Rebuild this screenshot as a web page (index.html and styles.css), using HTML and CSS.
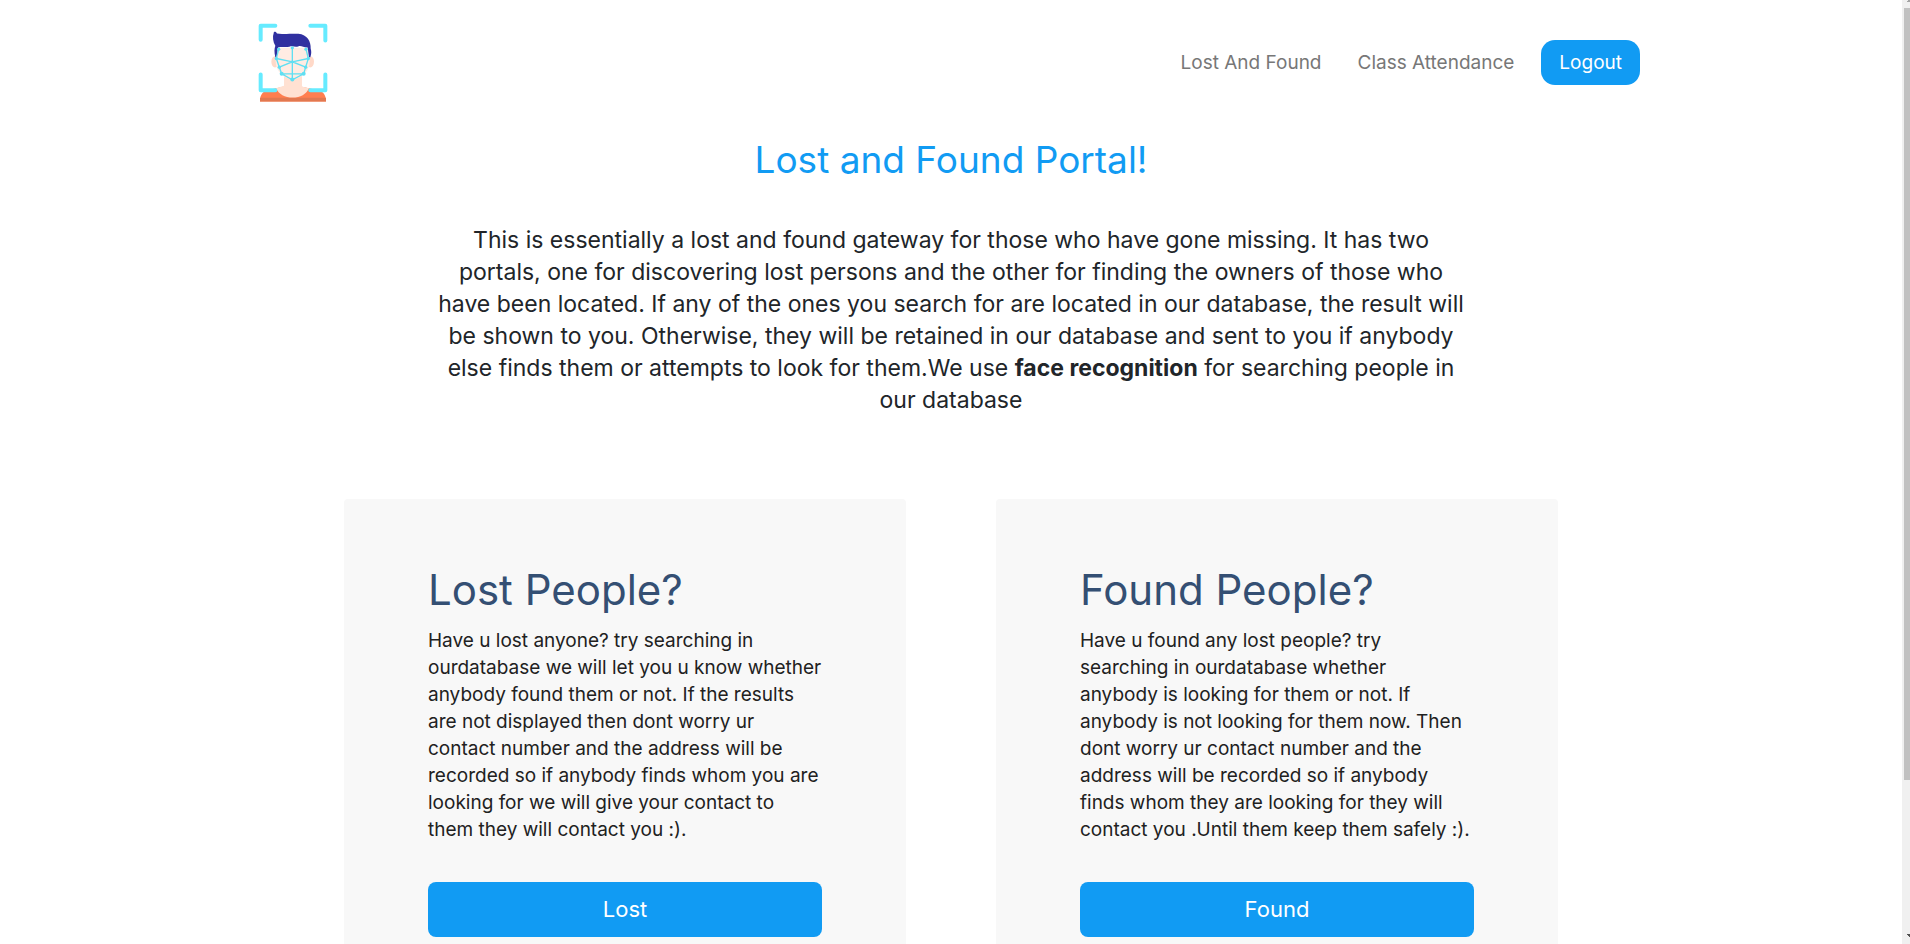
FILE: index.html
```html
<!DOCTYPE html>
<html lang="en">
<head>
<meta charset="utf-8">
<meta name="viewport" content="width=device-width, initial-scale=1">
<title>Lost and Found Portal</title>
<link rel="stylesheet" href="styles.css">
</head>
<body>
<div class="page">
  <header class="navbar">
    <a class="brand" href="#" aria-label="Home">
      <svg class="logo" viewBox="54 36 210 237" aria-hidden="true">
        <path d="M60 273c0-22 10-34 32-36l44-10h42l46 10c24 3 34 14 34 36z" fill="#ff7f50"/>
        <path d="M60 262h198v11H60z" fill="#e27850"/>
        <path d="M132 190h54v38l21 5c-8 18-26 28-49 28s-42-10-50-28l24-7z" fill="#ffe1d2"/>
        <ellipse cx="105" cy="154" rx="11" ry="17" fill="#ffd9c8"/>
        <ellipse cx="211" cy="154" rx="11" ry="17" fill="#ffd9c8"/>
        <path d="M107 112h102v42c0 30-28 53-51 53s-51-23-51-53z" fill="#ffece3"/>
        <path d="M106 140c-4-16-3-26 0-34-7-12-9-28-5-38 0-6 7-6 10 1 16 3 34-1 64 1 27 2 38 24 37 44 3 9 2 18-1 26h-4l-4-29c-14 0-18-6-27-4-11 4-18-2-28 2-14 2-22-1-34 2l-4 29z" fill="#3030a0"/>
        <g fill="none" stroke="#60dff2" stroke-width="4">
          <path d="M157 110v98M116 116l-7 28 9 26 7 20 32 18 34-18 6-20 8-26-7-28M109 144l48 10 48-10M118 170l39-16 40 16M125 190h66"/>
        </g>
        <g fill="#60dff2">
          <circle cx="116" cy="116" r="5"/><circle cx="157" cy="112" r="5"/><circle cx="198" cy="116" r="5"/>
          <circle cx="109" cy="144" r="5"/><circle cx="205" cy="144" r="5"/><circle cx="118" cy="170" r="5"/>
          <circle cx="197" cy="170" r="5"/><circle cx="125" cy="190" r="6"/><circle cx="191" cy="190" r="6"/>
          <circle cx="157" cy="207" r="6"/><circle cx="157" cy="154" r="4"/>
        </g>
        <path d="M62 88V46h44M211 46h45v44M62 192v47h44M211 239h45v-47" fill="none" stroke="#66ebff" stroke-width="12" stroke-linecap="round" stroke-linejoin="round"/>
      </svg>
    </a>
    <nav class="nav">
      <a class="nav-link" href="#">Lost And Found</a>
      <a class="nav-link" href="#">Class Attendance</a>
      <a class="logout" href="#">Logout</a>
    </nav>
  </header>
  <main>
    <section class="intro">
      <h1 class="title">Lost and Found Portal!</h1>
      <p class="lead">This is essentially a lost and found gateway for those who have gone missing. It has two<br>
        portals, one for discovering lost persons and the other for finding the owners of those who<br>
        have been located. If any of the ones you search for are located in our database, the result will<br>
        be shown to you. Otherwise, they will be retained in our database and sent to you if anybody<br>
        else finds them or attempts to look for them.We use <b>face recognition</b> for searching people in<br>
        our database</p>
    </section>
    <section class="cards">
      <article class="card">
        <h2 class="card-title">Lost People?</h2>
        <p class="card-text">Have u lost anyone? try searching in<br>
          ourdatabase we will let you u know whether<br>
          anybody found them or not. If the results<br>
          are not displayed then dont worry ur<br>
          contact number and the address will be<br>
          recorded so if anybody finds whom you are<br>
          looking for we will give your contact to<br>
          them they will contact you :).</p>
        <button class="action" type="button">Lost</button>
      </article>
      <article class="card">
        <h2 class="card-title">Found People?</h2>
        <p class="card-text">Have u found any lost people? try<br>
          searching in ourdatabase whether<br>
          anybody is looking for them or not. If<br>
          anybody is not looking for them now. Then<br>
          dont worry ur contact number and the<br>
          address will be recorded so if anybody<br>
          finds whom they are looking for they will<br>
          contact you .Until them keep them safely :).</p>
        <button class="action" type="button">Found</button>
      </article>
    </section>
  </main>
</div>
<div class="scrollbar" aria-hidden="true">
  <svg class="arrow" viewBox="0 0 8 8"><path d="M6 0h2v2H5V1h1z" fill="#a3a3a3"/></svg>
  <div class="thumb"></div>
  <svg class="arrow" viewBox="0 0 8 8"><path d="M5 0h3v3H7V2H6V1H5z" fill="#505050"/></svg>
</div>
</body>
</html>
```
FILE: styles.css
```css
* {
  box-sizing: border-box;
}

body {
  margin: 0;
  height: 100vh;
  display: flex;
  overflow: hidden;
  background: #fff;
  color: #212529;
  font-family: Inter, "Open Sans", sans-serif;
  font-size: 19px;
  line-height: 27px;
}

.page {
  flex: 1;
  min-width: 0;
  height: 100vh;
  overflow: hidden;
}

.navbar {
  display: flex;
  align-items: center;
  justify-content: space-between;
  max-width: 1386px;
  margin: 0 auto;
  padding: 22px 4px 22px 0;
}

.brand,
.logo {
  display: block;
}

.logo {
  width: 70px;
  height: 80px;
}

.nav {
  display: flex;
  align-items: center;
}

.nav-link {
  padding: 9px 18px;
  color: #777;
  text-decoration: none;
}

.logout {
  margin-left: 9px;
  padding: 9px 18px;
  border-radius: 14px;
  background: #119bf3;
  color: #fff;
  text-decoration: none;
}

.intro {
  padding: 14px 0 0;
  text-align: center;
}

.title {
  margin: 0;
  color: #119bf3;
  font-size: 37px;
  font-weight: 400;
  line-height: 44px;
}

.lead {
  margin: 42px 0 0;
  font-size: 23px;
  line-height: 32px;
  white-space: nowrap;
}

.cards {
  display: grid;
  grid-template-columns: 1fr 1fr;
  gap: 90px;
  max-width: 1214px;
  margin: 0 auto;
  padding: 83px 0 60px;
}

.card {
  padding: 66px 84px;
  border-radius: 4px;
  background: #f8f8f8;
  color: #212121;
}

.card-title {
  margin: 0;
  color: #344f73;
  font-size: 42px;
  font-weight: 400;
  line-height: 50px;
}

.card-text {
  margin: 12px 0 39px;
  white-space: nowrap;
}

.action {
  display: block;
  width: 100%;
  padding: 12px;
  border: 0;
  border-radius: 8px;
  background: #119bf3;
  color: #fff;
  font: inherit;
  font-size: 22px;
  line-height: 31px;
}

.scrollbar {
  display: flex;
  flex-direction: column;
  justify-content: space-between;
  width: 8px;
  padding-bottom: 2px;
  background: #f0f0f0;
}

.arrow {
  display: block;
  width: 8px;
  height: 8px;
}

.thumb {
  height: 82%;
  margin: 0 0 auto 2px;
  background: #c1c1c1;
}
```
